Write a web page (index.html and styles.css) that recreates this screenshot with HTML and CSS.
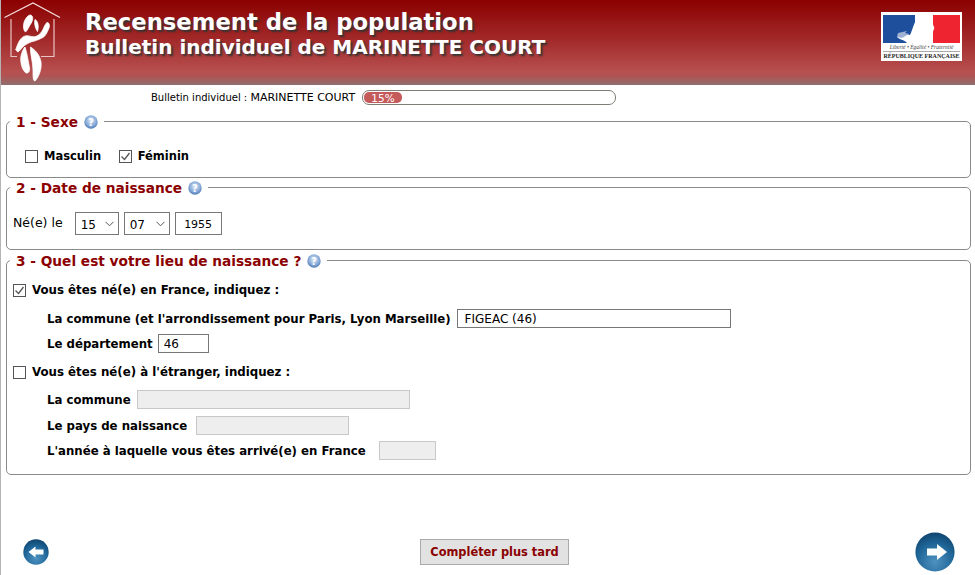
FILE: index.html
```html
<!DOCTYPE html>
<html lang="fr">
<head>
<meta charset="utf-8">
<title>Recensement de la population</title>
<link rel="stylesheet" href="styles.css">
</head>
<body>
<svg class="defs" width="0" height="0" aria-hidden="true">
  <defs>
    <radialGradient id="help" cx="0.5" cy="0.4" r="0.6">
      <stop offset="0" stop-color="#dfe9f7"/>
      <stop offset="0.6" stop-color="#8fb0dc"/>
      <stop offset="1" stop-color="#4f7db8"/>
    </radialGradient>
    <radialGradient id="btn" cx="0.5" cy="0.75" r="0.8">
      <stop offset="0" stop-color="#4d92c0"/>
      <stop offset="0.6" stop-color="#1e6496"/>
      <stop offset="1" stop-color="#0d3f66"/>
    </radialGradient>
  </defs>
</svg>
<div class="page">
  <header class="banner">
    <svg class="house" width="65" height="85" viewBox="0 0 65 85">
      <path d="M4.500 17.500 33 3 60 17.500" fill="none" stroke="#f3dede" stroke-width="1.200"/>
      <path d="M11 19V56.500H17M54 19V56.500H41" fill="none" stroke="#e8c4c4" stroke-width="1.200"/>
      <g fill="#fff" stroke="#fff" stroke-width="0.800" stroke-linejoin="round">
        <path d="M30.500 15C34 16 33 21 30 25 28 29 26 32 25.500 32 23 30 23 25 24.500 21 26 18 28 15 30.500 15Z"/>
        <path d="M35 19.500C38 21 39 26 37.500 31.500 35 28 34 23 35 19.500Z"/>
        <path d="M46.700 22.700C49 22 50 25 49 28 47 33 45 37 41.700 38 38 40 35 41 31.700 41.700 28 43 25 45 23 46.700 21 49 19.500 51 18 52L15.700 50C17 46 18 43 20 40 22 37 24 36 26.700 35.700 30 36 33 37 35 36.700 38 36 40 34 41.700 31.700 43.500 29 44.500 25 46.700 22.700Z"/>
        <path d="M25 47C27 53 28 60 29.500 68 30 72 28 73.500 26 73 22 70 20 62 21 56 22 52 23 49 25 47Z"/>
        <path d="M30.500 47C35 50 39.500 54 41 62 42 70 38 78 35 81 33 81 33 76 33 70 33 62 30 54 30.500 47Z"/>
      </g>
    </svg>
    <div class="titles">
      <h1 class="title">Recensement de la population</h1>
      <h2 class="subtitle">Bulletin individuel de MARINETTE COURT</h2>
    </div>
    <div class="marianne">
      <svg class="flag" width="77" height="28" viewBox="0 0 77 28">
        <rect width="77" height="28" fill="#fff"/>
        <rect width="32" height="28" fill="#1e4f9c"/>
        <rect x="50" width="27" height="28" fill="#ee2430"/>
        <path d="M36 1C43-1 48 2 49 7 50 10 52 13 51 14 50 16 50 19 47 20 44 21 41 24 40 28H24C22 25 17 25 14 22 18 20 22 19 27 20 30 14 31 6 36 1Z" fill="#fff"/>
        <path d="M15 18 24 16 22 18 26 19 19 23 14 22Z" fill="#9fb2d4"/>
      </svg>
      <div class="motto">Liberté • Égalité • Fraternité</div>
      <div class="rf">RÉPUBLIQUE FRANÇAISE</div>
    </div>
  </header>

  <div class="progress-row">
    <span class="progress-label">Bulletin individuel : <span class="progress-name">MARINETTE COURT</span></span>
    <div class="progress-track"><div class="progress-fill">15%</div></div>
  </div>

  <fieldset class="box box-sexe">
    <legend class="legend">1 - Sexe <svg class="help" width="14" height="14" viewBox="0 0 14 14"><circle cx="7" cy="7" r="6.700" fill="url(#help)"/><text x="7" y="10.500" text-anchor="middle" class="help-mark">?</text></svg></legend>
    <div class="choices">
      <label class="choice"><input class="check" type="checkbox">Masculin</label>
      <label class="choice"><input class="check" type="checkbox" checked>Féminin</label>
    </div>
  </fieldset>

  <fieldset class="box box-date">
    <legend class="legend">2 - Date de naissance <svg class="help" width="14" height="14" viewBox="0 0 14 14"><circle cx="7" cy="7" r="6.700" fill="url(#help)"/><text x="7" y="10.500" text-anchor="middle" class="help-mark">?</text></svg></legend>
    <div class="date-row">
      <span class="date-label">Né(e) le</span>
      <select class="field select day"><option>15</option></select>
      <select class="field select month"><option>07</option></select>
      <input class="field year" type="text" value="1955">
    </div>
  </fieldset>

  <fieldset class="box box-lieu">
    <legend class="legend">3 - Quel est votre lieu de naissance ? <svg class="help" width="14" height="14" viewBox="0 0 14 14"><circle cx="7" cy="7" r="6.700" fill="url(#help)"/><text x="7" y="10.500" text-anchor="middle" class="help-mark">?</text></svg></legend>
    <label class="choice head-france"><input class="check" type="checkbox" checked>Vous êtes né(e) en France, indiquez :</label>
    <div class="line line-commune"><span>La commune (et l'arrondissement pour Paris, Lyon Marseille)</span><input class="field w-commune" type="text" value="FIGEAC (46)"></div>
    <div class="line line-dept"><span>Le département</span><input class="field w-dept" type="text" value="46"></div>
    <label class="choice head-etranger"><input class="check" type="checkbox">Vous êtes né(e) à l'étranger, indiquez :</label>
    <div class="line line-e1"><span>La commune</span><input class="field off w-e1" type="text" disabled></div>
    <div class="line line-e2"><span>Le pays de naissance</span><input class="field off w-e2" type="text" disabled></div>
    <div class="line line-e3"><span>L'année à laquelle vous êtes arrivé(e) en France</span><input class="field off w-e3" type="text" disabled></div>
  </fieldset>

  <footer class="actions">
    <svg class="nav back" width="26" height="26" viewBox="0 0 26 26"><circle cx="13" cy="13" r="12.700" fill="url(#btn)"/><path d="M5.500 13 12.500 7.500V10.500H20.500V15.500H12.500V18.500Z" fill="#fff"/></svg>
    <button class="later" type="button">Compléter plus tard</button>
    <svg class="nav next" width="40" height="40" viewBox="0 0 40 40"><circle cx="20" cy="20" r="19.600" fill="url(#btn)"/><path d="M32 20 22 12V16.500H12V23.500H22V28Z" fill="#fff"/></svg>
  </footer>
</div>
</body>
</html>
```
FILE: styles.css
```css
* { box-sizing: border-box; }
html, body { margin: 0; padding: 0; height: 100%; background: #fff; overflow: hidden; }
body { font-family: "DejaVu Sans", Verdana, sans-serif; font-size: 12px; color: #000; }
.defs { position: absolute; }
.page { height: 575px; border-left: 1px solid #b4b4b4; display: flex; flex-direction: column; }

.banner {
  height: 85px; display: flex; align-items: flex-start;
  background: linear-gradient(#8b0000 0, #a32a2a 40px, #b75050 72px, #b05252 76px, #8f7070 85px);
}
.house { flex: none; margin-left: -1px; }
.titles { margin-left: 20px; padding-top: 9px; }
.title, .subtitle { margin: 0; color: #fff; font-weight: bold; text-shadow: 2px 2px 2px #333; white-space: nowrap; }
.title { font-size: 22.700px; line-height: 26px; }
.subtitle { font-size: 20px; line-height: 24px; }
.marianne {
  margin-left: auto; margin-right: 13px; margin-top: 12px; width: 81px; height: 49px;
  background: #fff; padding: 3px 2px 0; display: flex; flex-direction: column; align-items: center; overflow: hidden;
}
.flag { display: block; flex: none; }
.motto { font-family: "Liberation Serif", serif; font-style: italic; font-size: 5.500px; line-height: 8px; color: #444; white-space: nowrap; border-bottom: 1px solid #aaa; width: 100%; text-align: center; }
.rf { font-family: "Liberation Serif", serif; font-size: 6px; line-height: 8px; color: #222; white-space: nowrap; font-weight: bold; }

.progress-row { display: flex; align-items: center; height: 15px; margin-top: 5px; padding-left: 150px; }
.progress-label { font-size: 10px; width: 211px; white-space: nowrap; }
.progress-name { font-size: 11px; }
.progress-track { width: 254px; height: 15px; border: 1px solid #807d75; border-radius: 7px; padding: 1px; }
.progress-fill { width: 38px; height: 11px; border-radius: 5px; background: #c45a5a; color: #fff; font-size: 10.500px; line-height: 12px; text-align: center; }

.box { margin: 0 4px 0 5px; padding: 0; border: 1px solid #8a8a8a; border-radius: 5px; min-width: 0; }
.box-sexe { margin-top: 7px; height: 66px; }
.box-date { height: 72px; }
.box-lieu { margin-top: 1px; height: 224px; }
.legend { margin-left: 3px; padding: 0 6px; height: 18px; font-size: 13.700px; line-height: 20px; font-weight: bold; color: #8b0000; white-space: nowrap; }
.help { vertical-align: -2px; margin-left: 1px; }
.help-mark { font-size: 10px; font-weight: bold; fill: #fff; }

.choices { display: flex; gap: 17.500px; padding: 19px 0 0 18px; font-size: 11.500px; }
.choice { display: flex; align-items: center; gap: 6px; font-weight: bold; font-size: 11.800px; line-height: 14px; white-space: nowrap; }
.choices .choice { font-size: 11.500px; }
.check {
  appearance: none; -webkit-appearance: none; width: 13px; height: 13px; margin: 0; flex: none;
  border: 1px solid #555; background: #fff no-repeat center;
}
.check:checked {
  background-image: url("data:image/svg+xml,%3Csvg xmlns='http://www.w3.org/2000/svg' width='11' height='11'%3E%3Cpath d='M1.500 5.500 4.500 8.500 9.500 2' fill='none' stroke='%23555' stroke-width='1.300'/%3E%3C/svg%3E");
}

.date-row { display: flex; align-items: center; gap: 5px; padding: 16px 0 0 6px; }
.date-label { margin-right: 7px; font-size: 12.500px; margin-top: -3px; }
.field { height: 23px; border: 1px solid #777; background: #fff; font-family: inherit; font-size: 12px; color: #000; border-radius: 0; padding: 2px 6px; margin: 0; outline: none; }
.select {
  appearance: none; -webkit-appearance: none; padding: 3px 5px 1px;
  background: #fff no-repeat right 4px center url("data:image/svg+xml,%3Csvg xmlns='http://www.w3.org/2000/svg' width='9' height='6'%3E%3Cpath d='M.5 .8 4.500 4.800 8.500 .8' fill='none' stroke='%23555'/%3E%3C/svg%3E");
}
.day { width: 44px; }
.month { width: 46px; }
.year { width: 47px; text-align: center; padding: 3px 4px 1px; font-size: 11px; }

.head-france { padding-top: 14px; margin-left: 6px; }
.head-etranger { margin-top: 12px; margin-left: 6px; }
.line { display: flex; align-items: center; gap: 6px; margin-left: 40px; font-weight: bold; white-space: nowrap; font-size: 11.740px; }
.line .field { height: 19px; font-weight: normal; padding: 1px 5px; }
.line-commune { margin-top: 12px; }
.line-dept { margin-top: 6px; }
.line-e1 { margin-top: 11px; }
.line-e2 { margin-top: 7px; }
.line-e3 { margin-top: 6px; }
.line .w-commune { width: 274px; padding-left: 7px; }
.w-dept { width: 51px; margin-left: -1px; }
.w-e1 { width: 273px; }
.w-e2 { width: 153px; margin-left: 3px; }
.w-e3 { width: 57px; margin-left: 7px; }
.line .off { background: #eee; border-color: #c8c8c8; }

.actions { margin-top: auto; height: 40px; margin-bottom: 3px; display: flex; align-items: center; padding: 0 20px 0 22px; }
.nav { flex: none; display: block; }
.later { margin-left: 371px; width: 149px; height: 26px; border: 1px solid #aaa; background: #e2e2e2; color: #8b0000; font-family: inherit; font-size: 11.400px; font-weight: bold; padding: 0; border-radius: 0; }
.next { margin-left: auto; }
```
